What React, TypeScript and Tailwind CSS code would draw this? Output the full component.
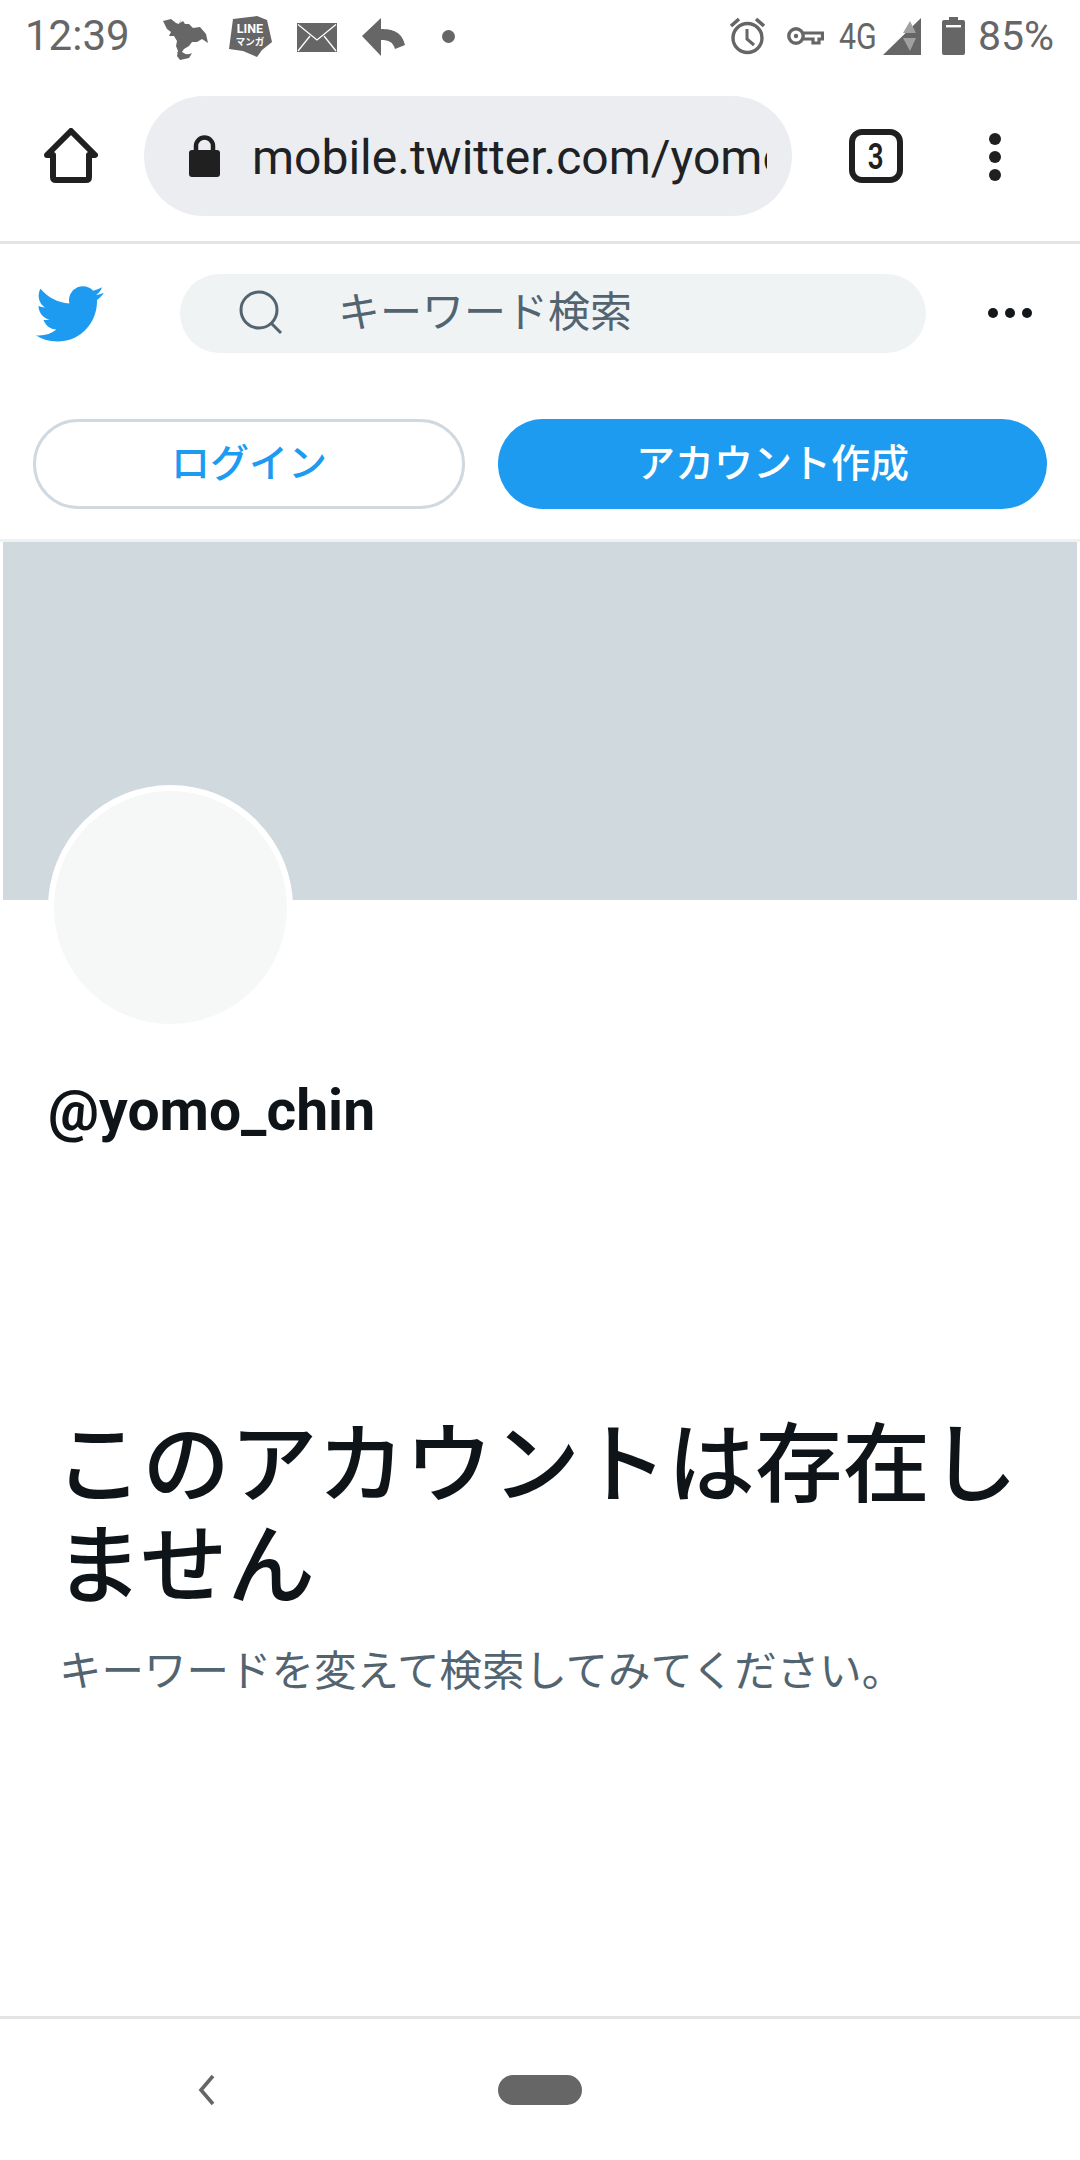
import React from "react";

const BIRD = "M23.643 4.937c-.835.37-1.732.62-2.675.727.962-.576 1.7-1.49 2.048-2.578-.9.534-1.897.922-2.958 1.13-.85-.904-2.06-1.47-3.4-1.47-2.572 0-4.658 2.086-4.658 4.66 0 .364.042.718.12 1.06-3.873-.195-7.304-2.05-9.602-4.868-.4.69-.63 1.49-.63 2.342 0 1.616.823 3.043 2.072 3.878-.764-.025-1.482-.234-2.11-.583v.06c0 2.257 1.605 4.14 3.737 4.568-.392.106-.803.162-1.227.162-.3 0-.593-.028-.877-.082.593 1.85 2.313 3.198 4.352 3.234-1.595 1.25-3.604 1.995-5.786 1.995-.376 0-.747-.022-1.112-.065 2.062 1.323 4.51 2.093 7.14 2.093 8.57 0 13.255-7.098 13.255-13.254 0-.2-.005-.402-.014-.602.91-.658 1.7-1.477 2.323-2.41z";

function StatusBar() {
  return (
    <div className="flex h-[72px] items-center justify-between pl-[25px] pr-[26px] text-[#666666] font-['Roboto',sans-serif]">
      <div className="flex items-center">
        <span className="w-[138px] text-[42px] leading-[72px]">12:39</span>
        <svg width="45" height="42" viewBox="0 0 45 42" className="mr-[21px] mt-[6px]">
          <path d="M0 3 L8 1 L13 5 L16 6 L18 1 L17 5 L20 3 L22 6 L26 6 L30 10 L37 9 L43 16 L45 25 L39 21 L34 24 L29 24 L26 28 L21 31 L19 34 L24 37 L29 35 L26 40 L17 42 L14 38 L15 33 L13 28 L14 23 L11 18 L6 18 L8 14 L4 11 Z" fill="#666666" />
          <path d="M15 34 Q19 38 27 37" stroke="#666666" strokeWidth="2" fill="none" />
        </svg>
        <svg width="43" height="42" viewBox="0 0 43 42" className="mr-[25px]">
          <path d="M4 4 L28 1 L38 5 L43 27 L33 35 L28 42 L14 36 L0 34 Z" fill="#666666" />
          <text x="21" y="18" textAnchor="middle" fontSize="12.5" fontWeight="700" fill="#ffffff" fontFamily="Roboto, sans-serif">LINE</text>
          <text x="21" y="30" textAnchor="middle" fontSize="9.5" fontWeight="700" fill="#ffffff" fontFamily="'Noto Sans CJK JP', sans-serif">マンガ</text>
        </svg>
        <svg width="40" height="29" viewBox="0 0 40 29" className="mr-[25px] mt-[2px]">
          <rect width="40" height="29" fill="#666666" />
          <path d="M1 1.5 L20 17 L39 1.5 M1 28 L13 13 M39 28 L27 13" stroke="#ffffff" strokeWidth="1.3" fill="none" />
        </svg>
        <svg width="43" height="38" viewBox="0 0 43 38" className="mr-[37px] mt-[2px]">
          <path d="M19 0 V11 C31 11 40 14 43 27 L33 31 C31 24 27 22 19 22 V38 L0 18 Z" fill="#666666" />
        </svg>
        <span className="h-[13px] w-[13px] rounded-full bg-[#666666]" />
      </div>
      <div className="flex items-center">
        <svg width="37" height="38" viewBox="0 0 37 38" className="mr-[21px]">
          <circle cx="18.5" cy="21" r="14.5" fill="none" stroke="#666666" strokeWidth="3.4" />
          <path d="M18 12 V22 L25 28" fill="none" stroke="#666666" strokeWidth="3" />
          <path d="M2 9 L10 2 M35 9 L27 2" stroke="#666666" strokeWidth="3.6" fill="none" />
        </svg>
        <svg width="37" height="20" viewBox="0 0 37 20" className="mr-[15px]">
          <circle cx="9" cy="10" r="7.2" fill="none" stroke="#666666" strokeWidth="3.4" />
          <circle cx="9" cy="10" r="2.2" fill="#666666" />
          <path d="M16 7 H35.5 V13 H32 V17 H26 V13 H16" fill="none" stroke="#666666" strokeWidth="3.2" />
        </svg>
        <span className="mr-[6px] w-[38px] origin-left scale-x-[0.82] whitespace-nowrap text-[37px] leading-none">4G</span>
        <svg width="38" height="37" viewBox="0 0 38 37" className="mr-[21px]">
          <path d="M38 0 V37 H0 Z" fill="#666666" />
          <path d="M27 3 L33 15 H20 Z M20 20 H33 L27 33 Z" fill="#a0a0a0" />
        </svg>
        <svg width="23" height="38" viewBox="0 0 23 38" className="mr-[13px]">
          <path d="M7 0 H16 V3 H21 Q23 3 23 5 V36 Q23 38 21 38 H2 Q0 38 0 36 V5 Q0 3 2 3 H7 Z" fill="#666666" />
          <rect x="4" y="8" width="15" height="2.4" fill="#ffffff" />
        </svg>
        <span className="text-[41px] leading-[72px]">85%</span>
      </div>
    </div>
  );
}

function Toolbar() {
  return (
    <div className="flex h-[172px] items-start border-b-[3px] border-[#e3e5e2] pl-[44px] pt-[24px]">
      <svg width="54" height="56" viewBox="0 0 54 56" className="mr-[46px] mt-[32px] shrink-0">
        <path d="M3 27 L27 3 L51 27 H45 V49 Q45 52 42 52 H12 Q9 52 9 49 V27 Z" fill="none" stroke="#202020" strokeWidth="6" strokeLinejoin="round" />
      </svg>
      <div className="flex h-[120px] w-[648px] shrink-0 items-center rounded-full bg-[#ebedf0] pl-[45px] pr-[25px]">
        <svg width="31" height="42" viewBox="0 0 31 42" className="mr-[32px] shrink-0">
          <path d="M7 16 V11 A8.5 8.5 0 0 1 24 11 V16" fill="none" stroke="#202020" strokeWidth="4.5" />
          <rect x="0" y="15" width="31" height="27" rx="3" fill="#202020" />
        </svg>
        <div className="overflow-hidden whitespace-nowrap pt-[3px] font-['Roboto',sans-serif] text-[48px] leading-[60px] text-[#202124]">
          mobile.twitter.com/yomo
        </div>
      </div>
      <div className="ml-[57px] mt-[33px] flex h-[54px] w-[54px] shrink-0 items-center justify-center rounded-[13px] border-[6px] border-[#202020] font-['Roboto',sans-serif] text-[37px] font-semibold leading-none text-[#202020]">
        <span className="scale-x-[0.75]">3</span>
      </div>
      <div className="ml-[86px] mt-[37px] flex shrink-0 flex-col gap-[6px]">
        <span className="h-[12px] w-[12px] rounded-full bg-[#202020]" />
        <span className="h-[12px] w-[12px] rounded-full bg-[#202020]" />
        <span className="h-[12px] w-[12px] rounded-full bg-[#202020]" />
      </div>
    </div>
  );
}

function TwitterHeader() {
  return (
    <div className="flex h-[138px] items-center pl-[33px]">
      <svg width="72" height="72" viewBox="0 0 24 24" className="mr-[75px] mt-[2px] shrink-0">
        <path d={BIRD} fill="#1d9bf0" />
      </svg>
      <div className="flex h-[79px] w-[746px] shrink-0 items-center rounded-full bg-[#eff3f4] pl-[59px]">
        <svg width="44" height="46" viewBox="0 0 44 46" className="mr-[55px] shrink-0">
          <circle cx="20" cy="20" r="18" fill="none" stroke="#536471" strokeWidth="3" />
          <path d="M32 33 L42 43" stroke="#536471" strokeWidth="3" />
        </svg>
        <span className="pb-[8px] font-['Noto_Sans_CJK_JP',sans-serif] text-[42px] leading-none text-[#536471]">キーワード検索</span>
      </div>
      <div className="ml-[62px] flex gap-[7px]">
        <span className="h-[10px] w-[10px] rounded-full bg-[#14171a]" />
        <span className="h-[10px] w-[10px] rounded-full bg-[#14171a]" />
        <span className="h-[10px] w-[10px] rounded-full bg-[#14171a]" />
      </div>
    </div>
  );
}

function Buttons() {
  return (
    <div className="flex gap-[33px] px-[33px] pb-[30px] pt-[37px] font-['Noto_Sans_CJK_JP',sans-serif]">
      <div className="flex h-[90px] w-[432px] items-center justify-center rounded-full border-[3px] border-[#d0d9df] bg-white pb-[8px] text-[39px] font-medium leading-none text-[#1d9bf0]">
        ログイン
      </div>
      <div className="flex h-[90px] w-[549px] items-center justify-center rounded-full bg-[#1d9bf0] pb-[8px] text-[39px] font-medium leading-none text-white">
        アカウント作成
      </div>
    </div>
  );
}

export default function App() {
  return (
    <div className="flex h-[2160px] w-[1080px] flex-col overflow-hidden bg-white">
      <StatusBar />
      <Toolbar />
      <TwitterHeader />
      <Buttons />
      <div className="border-t-[3px] border-[#f0f2f2] px-[3px]">
        <div className="h-[358px] bg-[#d0d9dd]" />
      </div>
      <div className="relative -mt-[115px] ml-[48px] h-[245px] w-[245px] rounded-full border-[6px] border-white bg-[#f5f8f7]" />
      <div className="mt-[51px] pl-[48px] font-['Roboto',sans-serif] text-[57px] font-bold leading-[60px] text-[#0f1419]">
        @yomo_chin
      </div>
      <div className="mt-[266px] pl-[55px] pr-[50px] font-['Noto_Sans_CJK_JP',sans-serif] text-[87.5px] font-medium leading-[101px] text-[#0f1419]">
        このアカウントは存在しません
      </div>
      <div className="mt-[29px] pl-[59px] font-['Noto_Sans_CJK_JP',sans-serif] text-[42.5px] leading-[60px] text-[#536471]">
        キーワードを変えて検索してみてください。
      </div>
      <div className="mt-auto flex h-[144px] items-center border-t-[3px] border-[#e3e5e2] pl-[198px]">
        <svg width="18" height="32" viewBox="0 0 18 32" className="mr-[282px]">
          <path d="M15 2 L3 16 L15 30" fill="none" stroke="#666666" strokeWidth="3.6" />
        </svg>
        <span className="h-[30px] w-[84px] rounded-[15px] bg-[#666666]" />
      </div>
    </div>
  );
}
